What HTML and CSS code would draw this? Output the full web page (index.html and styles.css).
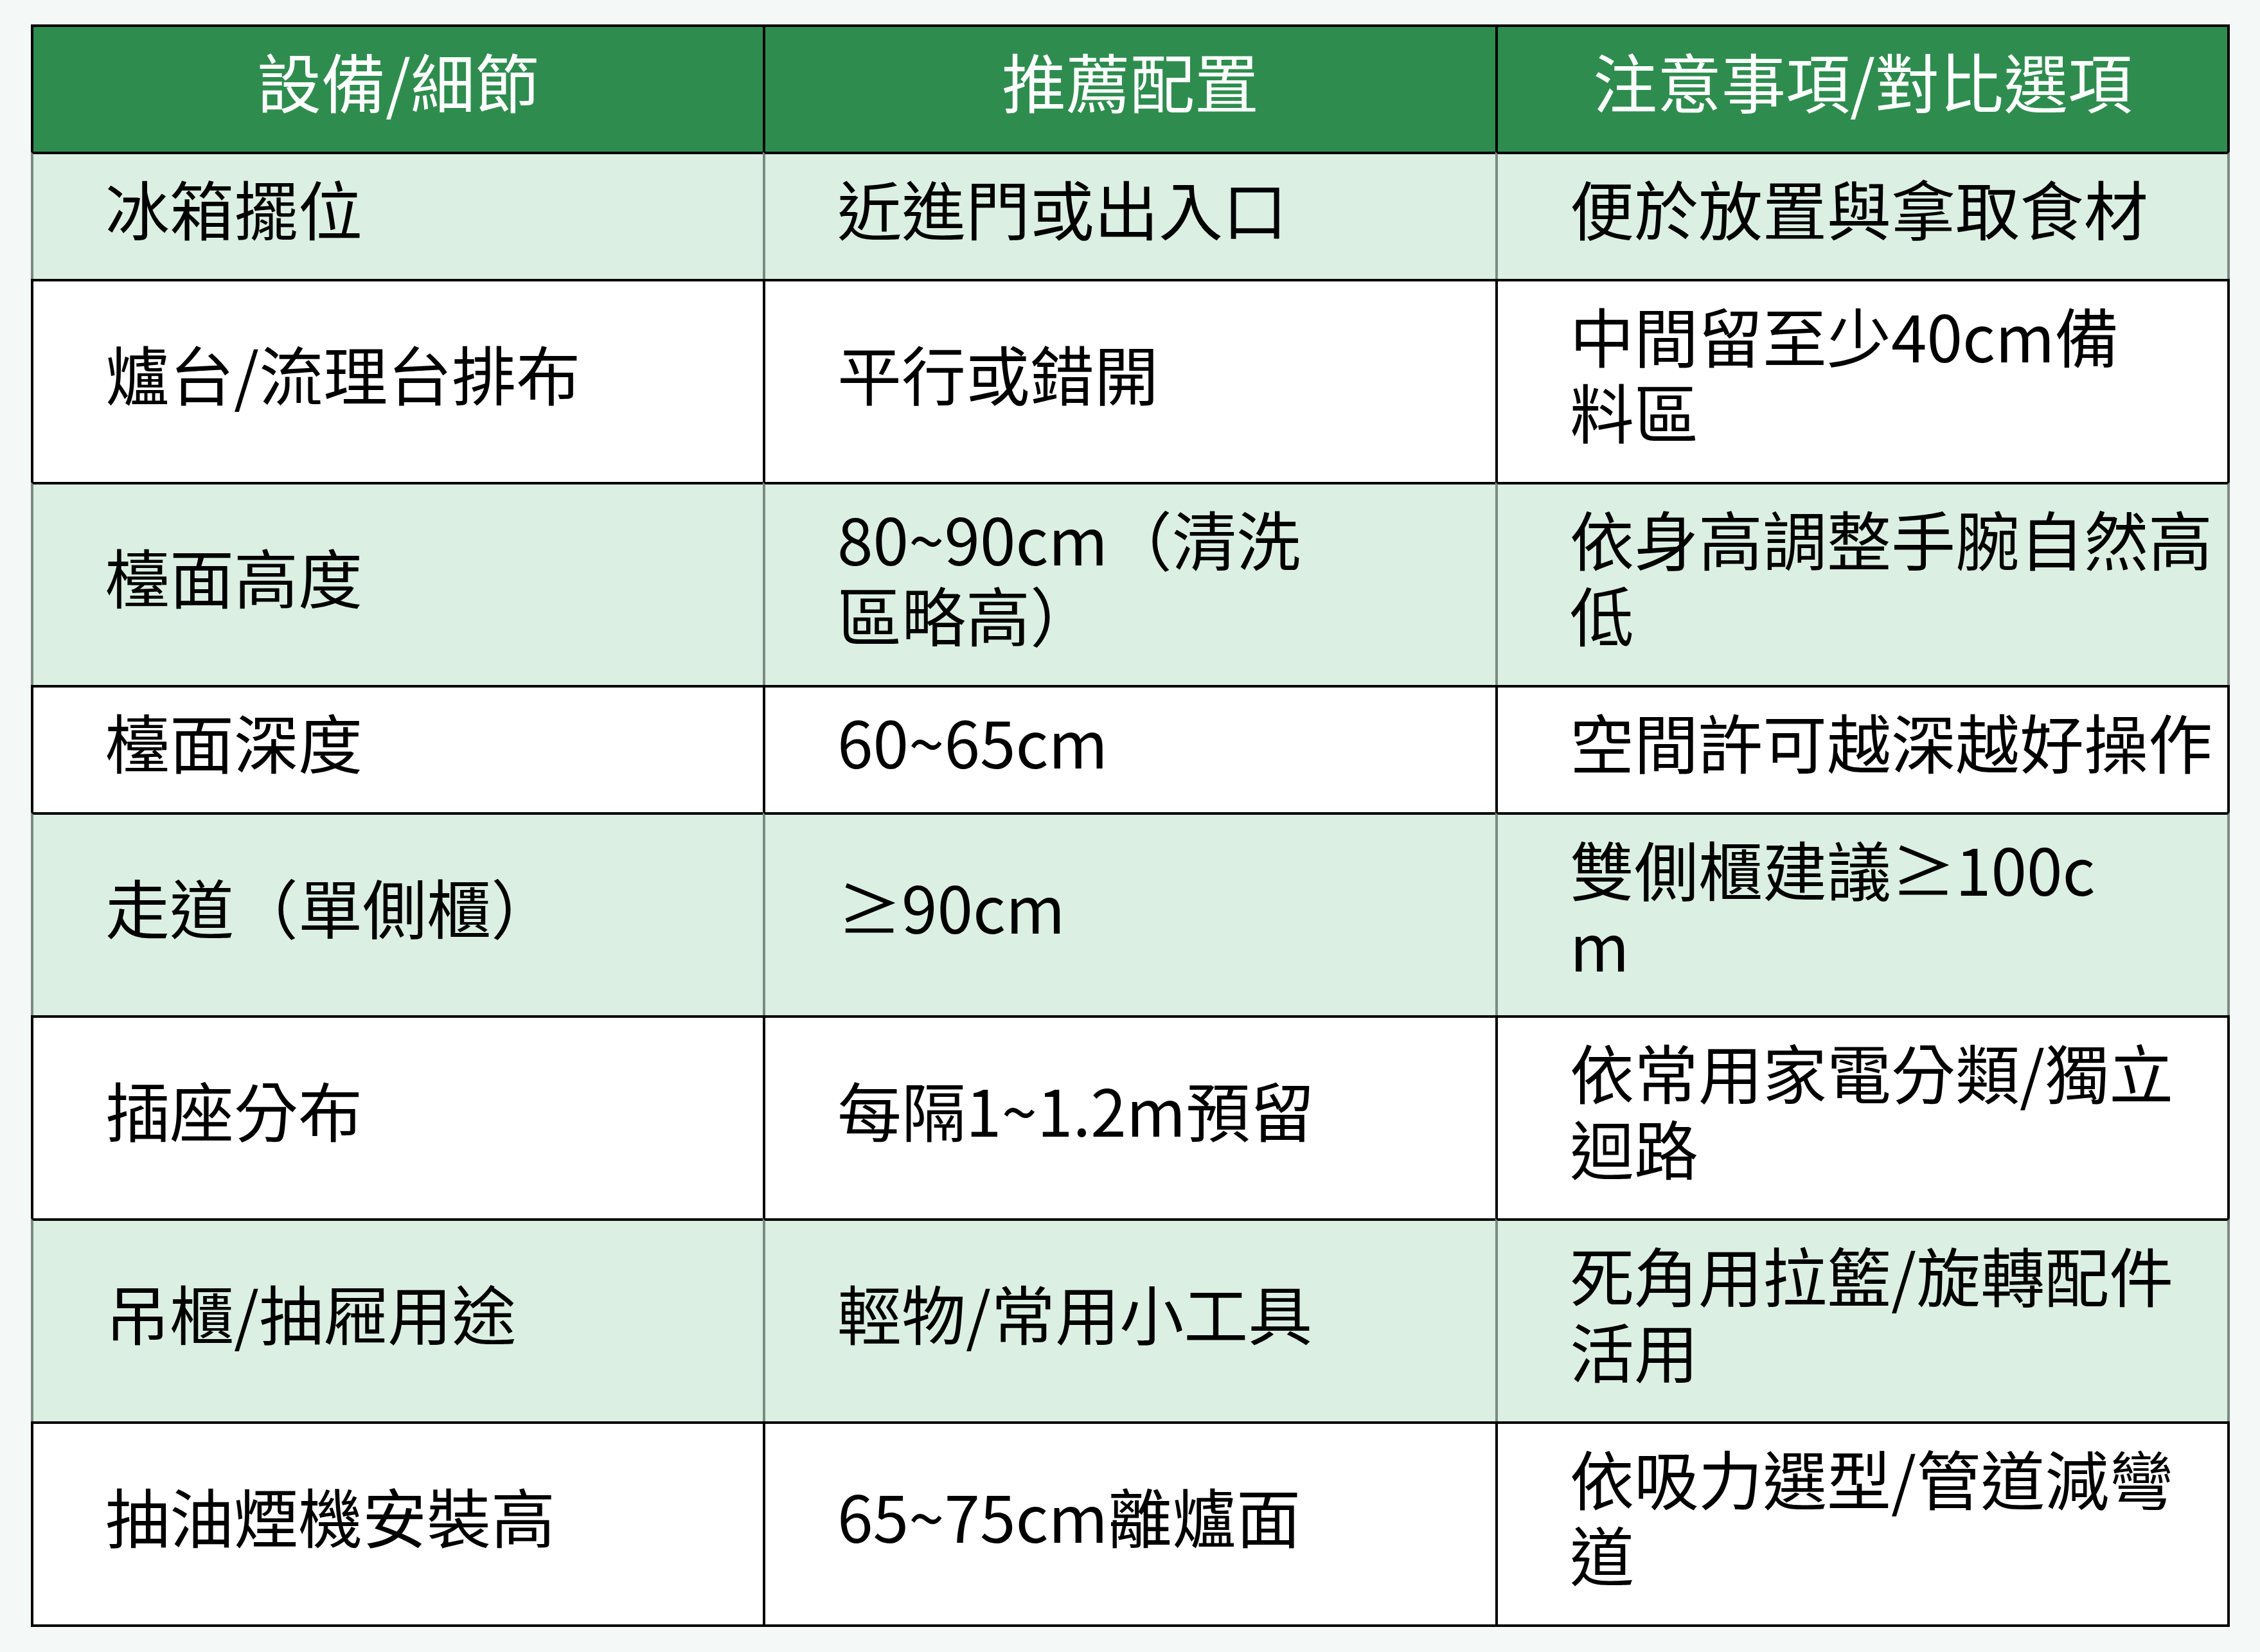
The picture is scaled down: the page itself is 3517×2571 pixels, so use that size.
FILE: index.html
```html
<!DOCTYPE html>
<html lang="zh-Hant">
<head>
<meta charset="utf-8">
<title>廚房配置表</title>
<link rel="stylesheet" href="styles.css">
</head>
<body>
<div class="grid">
  <div class="cell head">設備/細節</div>
  <div class="cell head">推薦配置</div>
  <div class="cell head last">注意事項/對比選項</div>

  <div class="cell alt">冰箱擺位</div>
  <div class="cell alt">近進門或出入口</div>
  <div class="cell alt last">便於放置與拿取食材</div>

  <div class="cell">爐台/流理台排布</div>
  <div class="cell">平行或錯開</div>
  <div class="cell last">中間留至少40cm備<br>料區</div>

  <div class="cell alt">檯面高度</div>
  <div class="cell alt">80~90cm（清洗<br>區略高）</div>
  <div class="cell alt last">依身高調整手腕自然高<br>低</div>

  <div class="cell">檯面深度</div>
  <div class="cell">60~65cm</div>
  <div class="cell last">空間許可越深越好操作</div>

  <div class="cell alt">走道（單側櫃）</div>
  <div class="cell alt">≥90cm</div>
  <div class="cell alt last">雙側櫃建議≥100c<br>m</div>

  <div class="cell">插座分布</div>
  <div class="cell">每隔1~1.2m預留</div>
  <div class="cell last">依常用家電分類/獨立<br>迴路</div>

  <div class="cell alt">吊櫃/抽屜用途</div>
  <div class="cell alt">輕物/常用小工具</div>
  <div class="cell alt last">死角用拉籃/旋轉配件<br>活用</div>

  <div class="cell">抽油煙機安裝高</div>
  <div class="cell">65~75cm離爐面</div>
  <div class="cell last">依吸力選型/管道減彎<br>道</div>
</div>
</body>
</html>
```

FILE: styles.css
```css
html, body {
  background: #f4f8f7;
}
body {
  margin: 0;
  padding: 38px 0 0 48px;
  font-family: "Noto Sans CJK TC", "Noto Sans CJK SC", "Noto Sans", sans-serif;
}
.grid {
  display: grid;
  grid-template-columns: 1139px 1140px 1143px;
  width: 3422px;
  border-bottom: 4px solid #000;
}
.cell {
  display: flex;
  align-items: center;
  box-sizing: border-box;
  padding: 24px 0 52px 112px;
  font-size: 100px;
  line-height: 118px;
  color: #000;
  white-space: nowrap;
  background: #ffffff;
  border-top: 4px solid #000;
  border-left: 4px solid #000;
}
.cell.last {
  border-right: 4px solid #000;
}
.cell.head {
  background: #2e8d4e;
  color: #ffffff;
  justify-content: center;
  padding-left: 0;
}
.cell.alt {
  background: #dbefe3;
  border-left-color: #7d8a82;
}
.cell.alt.last {
  border-right-color: #7d8a82;
}
```
